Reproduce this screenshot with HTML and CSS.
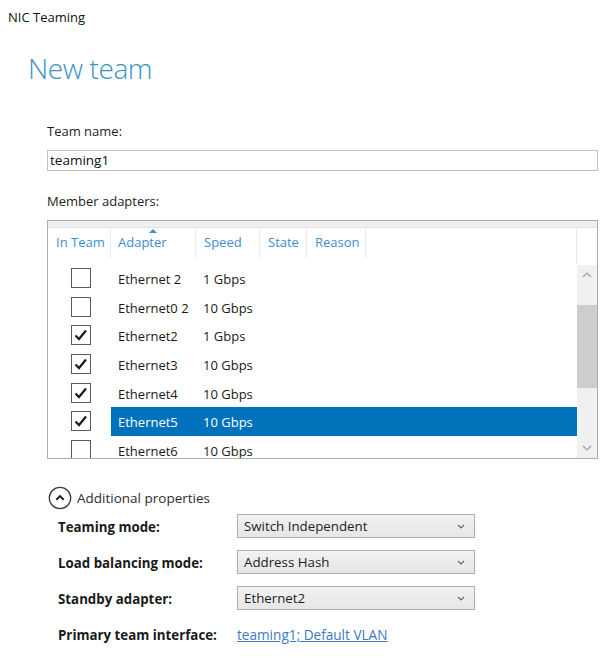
FILE: index.html
```html
<!DOCTYPE html>
<html>
<head>
<meta charset="utf-8">
<link rel="stylesheet" href="styles.css">
</head>
<body>
<div class="titlebar">NIC Teaming</div>
<h1 class="page-title">New team</h1>
<div class="form">
  <div class="field-label label-team">Team name:</div>
  <div class="textbox">teaming1</div>
  <div class="field-label label-members">Member adapters:</div>
  <div class="list">
    <div class="list-band"></div>
    <div class="list-header">
      <div class="col col-inteam">In Team</div>
      <div class="col col-adapter">Adapter<span class="sort-arrow"></span></div>
      <div class="col col-speed">Speed</div>
      <div class="col col-state">State</div>
      <div class="col col-reason">Reason</div>
      <div class="col col-fill"></div>
      <div class="col-end"></div>
    </div>
    <div class="list-body">
      <div class="rows">
        <div class="row">
          <div class="cell-check"><span class="checkbox"></span></div>
          <div class="cell-main"><span class="c-adapter">Ethernet 2</span><span class="c-speed">1 Gbps</span></div>
        </div>
        <div class="row">
          <div class="cell-check"><span class="checkbox"></span></div>
          <div class="cell-main"><span class="c-adapter">Ethernet0 2</span><span class="c-speed">10 Gbps</span></div>
        </div>
        <div class="row">
          <div class="cell-check"><span class="checkbox"><svg viewBox="0 0 20 20" width="20" height="20"><path d="M4.5 10.5 L8 14 L15 5.5" fill="none" stroke="#1a1a1a" stroke-width="2.2"/></svg></span></div>
          <div class="cell-main"><span class="c-adapter">Ethernet2</span><span class="c-speed">1 Gbps</span></div>
        </div>
        <div class="row">
          <div class="cell-check"><span class="checkbox"><svg viewBox="0 0 20 20" width="20" height="20"><path d="M4.5 10.5 L8 14 L15 5.5" fill="none" stroke="#1a1a1a" stroke-width="2.2"/></svg></span></div>
          <div class="cell-main"><span class="c-adapter">Ethernet3</span><span class="c-speed">10 Gbps</span></div>
        </div>
        <div class="row">
          <div class="cell-check"><span class="checkbox"><svg viewBox="0 0 20 20" width="20" height="20"><path d="M4.5 10.5 L8 14 L15 5.5" fill="none" stroke="#1a1a1a" stroke-width="2.2"/></svg></span></div>
          <div class="cell-main"><span class="c-adapter">Ethernet4</span><span class="c-speed">10 Gbps</span></div>
        </div>
        <div class="row">
          <div class="cell-check"><span class="checkbox"><svg viewBox="0 0 20 20" width="20" height="20"><path d="M4.5 10.5 L8 14 L15 5.5" fill="none" stroke="#1a1a1a" stroke-width="2.2"/></svg></span></div>
          <div class="cell-main selected"><span class="c-adapter">Ethernet5</span><span class="c-speed">10 Gbps</span></div>
        </div>
        <div class="row">
          <div class="cell-check"><span class="checkbox"></span></div>
          <div class="cell-main"><span class="c-adapter">Ethernet6</span><span class="c-speed">10 Gbps</span></div>
        </div>
      </div>
      <div class="scrollbar">
        <div class="sb-btn"><svg viewBox="0 0 10 6" width="10" height="6"><path d="M1 5 L5 1 L9 5" fill="none" stroke="#9d9d9d" stroke-width="1.2"/></svg></div>
        <div class="sb-track"><div class="sb-thumb"></div></div>
        <div class="sb-btn sb-down"><svg viewBox="0 0 10 6" width="10" height="6"><path d="M1 1 L5 5 L9 1" fill="none" stroke="#9d9d9d" stroke-width="1.2"/></svg></div>
      </div>
    </div>
  </div>

  <div class="additional">
    <svg class="circle-icon" viewBox="0 0 24 24" width="24" height="24"><circle cx="12" cy="12" r="10.7" fill="none" stroke="#3c3c3c" stroke-width="1.3"/><path d="M8.3 13.8 L12 10.1 L15.7 13.8" fill="none" stroke="#1e1e1e" stroke-width="2"/></svg>
    <span>Additional properties</span>
  </div>

  <div class="props">
    <div class="prop-label">Teaming mode:</div>
    <div class="dropdown"><span>Switch Independent</span><svg viewBox="0 0 8 5" width="8" height="5"><path d="M1 1 L4 4 L7 1" fill="none" stroke="#666" stroke-width="1.2"/></svg></div>
    <div class="prop-label">Load balancing mode:</div>
    <div class="dropdown"><span>Address Hash</span><svg viewBox="0 0 8 5" width="8" height="5"><path d="M1 1 L4 4 L7 1" fill="none" stroke="#666" stroke-width="1.2"/></svg></div>
    <div class="prop-label">Standby adapter:</div>
    <div class="dropdown"><span>Ethernet2</span><svg viewBox="0 0 8 5" width="8" height="5"><path d="M1 1 L4 4 L7 1" fill="none" stroke="#666" stroke-width="1.2"/></svg></div>
    <div class="prop-label">Primary team interface:</div>
    <div class="prop-link"><a href="#">teaming1; Default VLAN</a></div>
  </div>
</div>
</body>
</html>
```

FILE: styles.css
```css
* { box-sizing: border-box; }
html, body { margin: 0; padding: 0; background: #fff; }
body {
  font-family: "Open Sans", "Noto Sans", sans-serif;
  font-size: 13px;
  color: #1a1a1a;
  width: 606px;
  height: 658px;
  overflow: hidden;
}
.titlebar {
  height: 34px;
  line-height: 34px;
  padding-left: 8px;
  font-size: 13px;
  color: #111;
}
.page-title {
  margin: 16px 0 0 28px;
  font-size: 28px;
  letter-spacing: -0.4px;
  font-weight: 300;
  line-height: 36px;
  color: #3a93c4;
}
.form {
  padding: 0 8px 0 47px;
}
.field-label {
  line-height: 20px;
  font-size: 13px;
  color: #1e1e1e;
}
.label-team { margin-top: 35px; }
.textbox {
  margin-top: 9px;
  height: 21px;
  border: 1px solid #c4c4c4;
  border-bottom-color: #bdbdbd;
  padding-left: 2px;
  line-height: 19px;
  font-size: 13.5px;
  color: #111;
}
.label-members { margin-top: 20px; }
.list {
  margin-top: 9px;
  height: 239px;
  width: 551px;
  border: 1px solid #acacac;
  display: flex;
  flex-direction: column;
  overflow: hidden;
}
.list-band {
  height: 7px;
  background: #f0f0f0;
  border-bottom: 1px solid #e3e3e3;
  flex: none;
}
.list-header {
  height: 36px;
  flex: none;
  display: grid;
  grid-template-columns: 63px 85px 64px 47px 59px 1fr 20px;
}
.col {
  position: relative;
  padding-left: 8px;
  padding-top: 4px;
  line-height: 20px;
  font-size: 13px;
  color: #3c8dd3;
  border-right: 1px solid #ebebeb;
  height: 30px;
}
.col-adapter { padding-left: 7px; }
.col-fill { border-right: 1px solid #e6e6e6; height: 36px; }
.sort-arrow {
  position: absolute;
  left: 38px;
  top: 1px;
  width: 0; height: 0;
  border-left: 4px solid transparent;
  border-right: 4px solid transparent;
  border-bottom: 4px solid #3c8dd3;
}
.list-body {
  flex: 1;
  display: flex;
  min-height: 0;
}
.rows {
  flex: 1;
  overflow: hidden;
}
.row {
  height: 28.6px;
  display: flex;
}
.cell-check {
  width: 63px;
  flex: none;
  display: flex;
  align-items: center;
  padding-left: 23px;
}
.checkbox {
  width: 20px;
  height: 20px;
  border: 1px solid #5a5a5a;
  background: #fff;
  display: block;
  position: relative;
}
.checkbox svg {
  position: absolute;
  left: -1px;
  top: -1px;
}
.cell-main {
  flex: 1;
  display: flex;
  align-items: center;
  padding-top: 2px;
  font-size: 13px;
  color: #1a1a1a;
}
.cell-main.selected {
  background: #0072bc;
  color: #fff;
}
.c-adapter { width: 85px; padding-left: 7px; }
.c-speed { padding-left: 7px; }
.scrollbar {
  width: 20px;
  flex: none;
  background: #f0f0f0;
  display: flex;
  flex-direction: column;
  margin-top: 1px;
}
.sb-btn {
  height: 20px;
  display: flex;
  align-items: center;
  justify-content: center;
  flex: none;
}
.sb-track {
  flex: 1;
  padding-top: 20px;
  padding-bottom: 50px;
  display: flex;
}
.sb-thumb {
  flex: 1;
  background: #cdcdcd;
}
.additional {
  margin-top: 27px;
  height: 24px;
  display: flex;
  align-items: center;
  gap: 5px;
  padding-left: 1px;
  font-size: 13.5px;
  color: #2e2e2e;
}
.circle-icon { flex: none; }
.props {
  margin-top: 4px;
  padding-left: 11px;
  display: grid;
  grid-template-columns: 179px 238px;
  grid-auto-rows: 24px;
  row-gap: 12px;
  align-items: center;
}
.prop-label {
  font-weight: 700;
  font-size: 13.3px;
  padding-top: 2px;
  color: #1a1a1a;
}
.dropdown {
  height: 24px;
  border: 1px solid #adadad;
  background: linear-gradient(#f2f2f2, #e6e6e6);
  display: flex;
  align-items: center;
  justify-content: space-between;
  padding: 0 9px 0 6px;
  font-size: 13.3px;
  color: #1e1e1e;
}
.prop-link { padding-top: 1px; }
.prop-link a {
  color: #3a7ac6;
  text-decoration: underline;
  font-size: 13.6px;
}
```
